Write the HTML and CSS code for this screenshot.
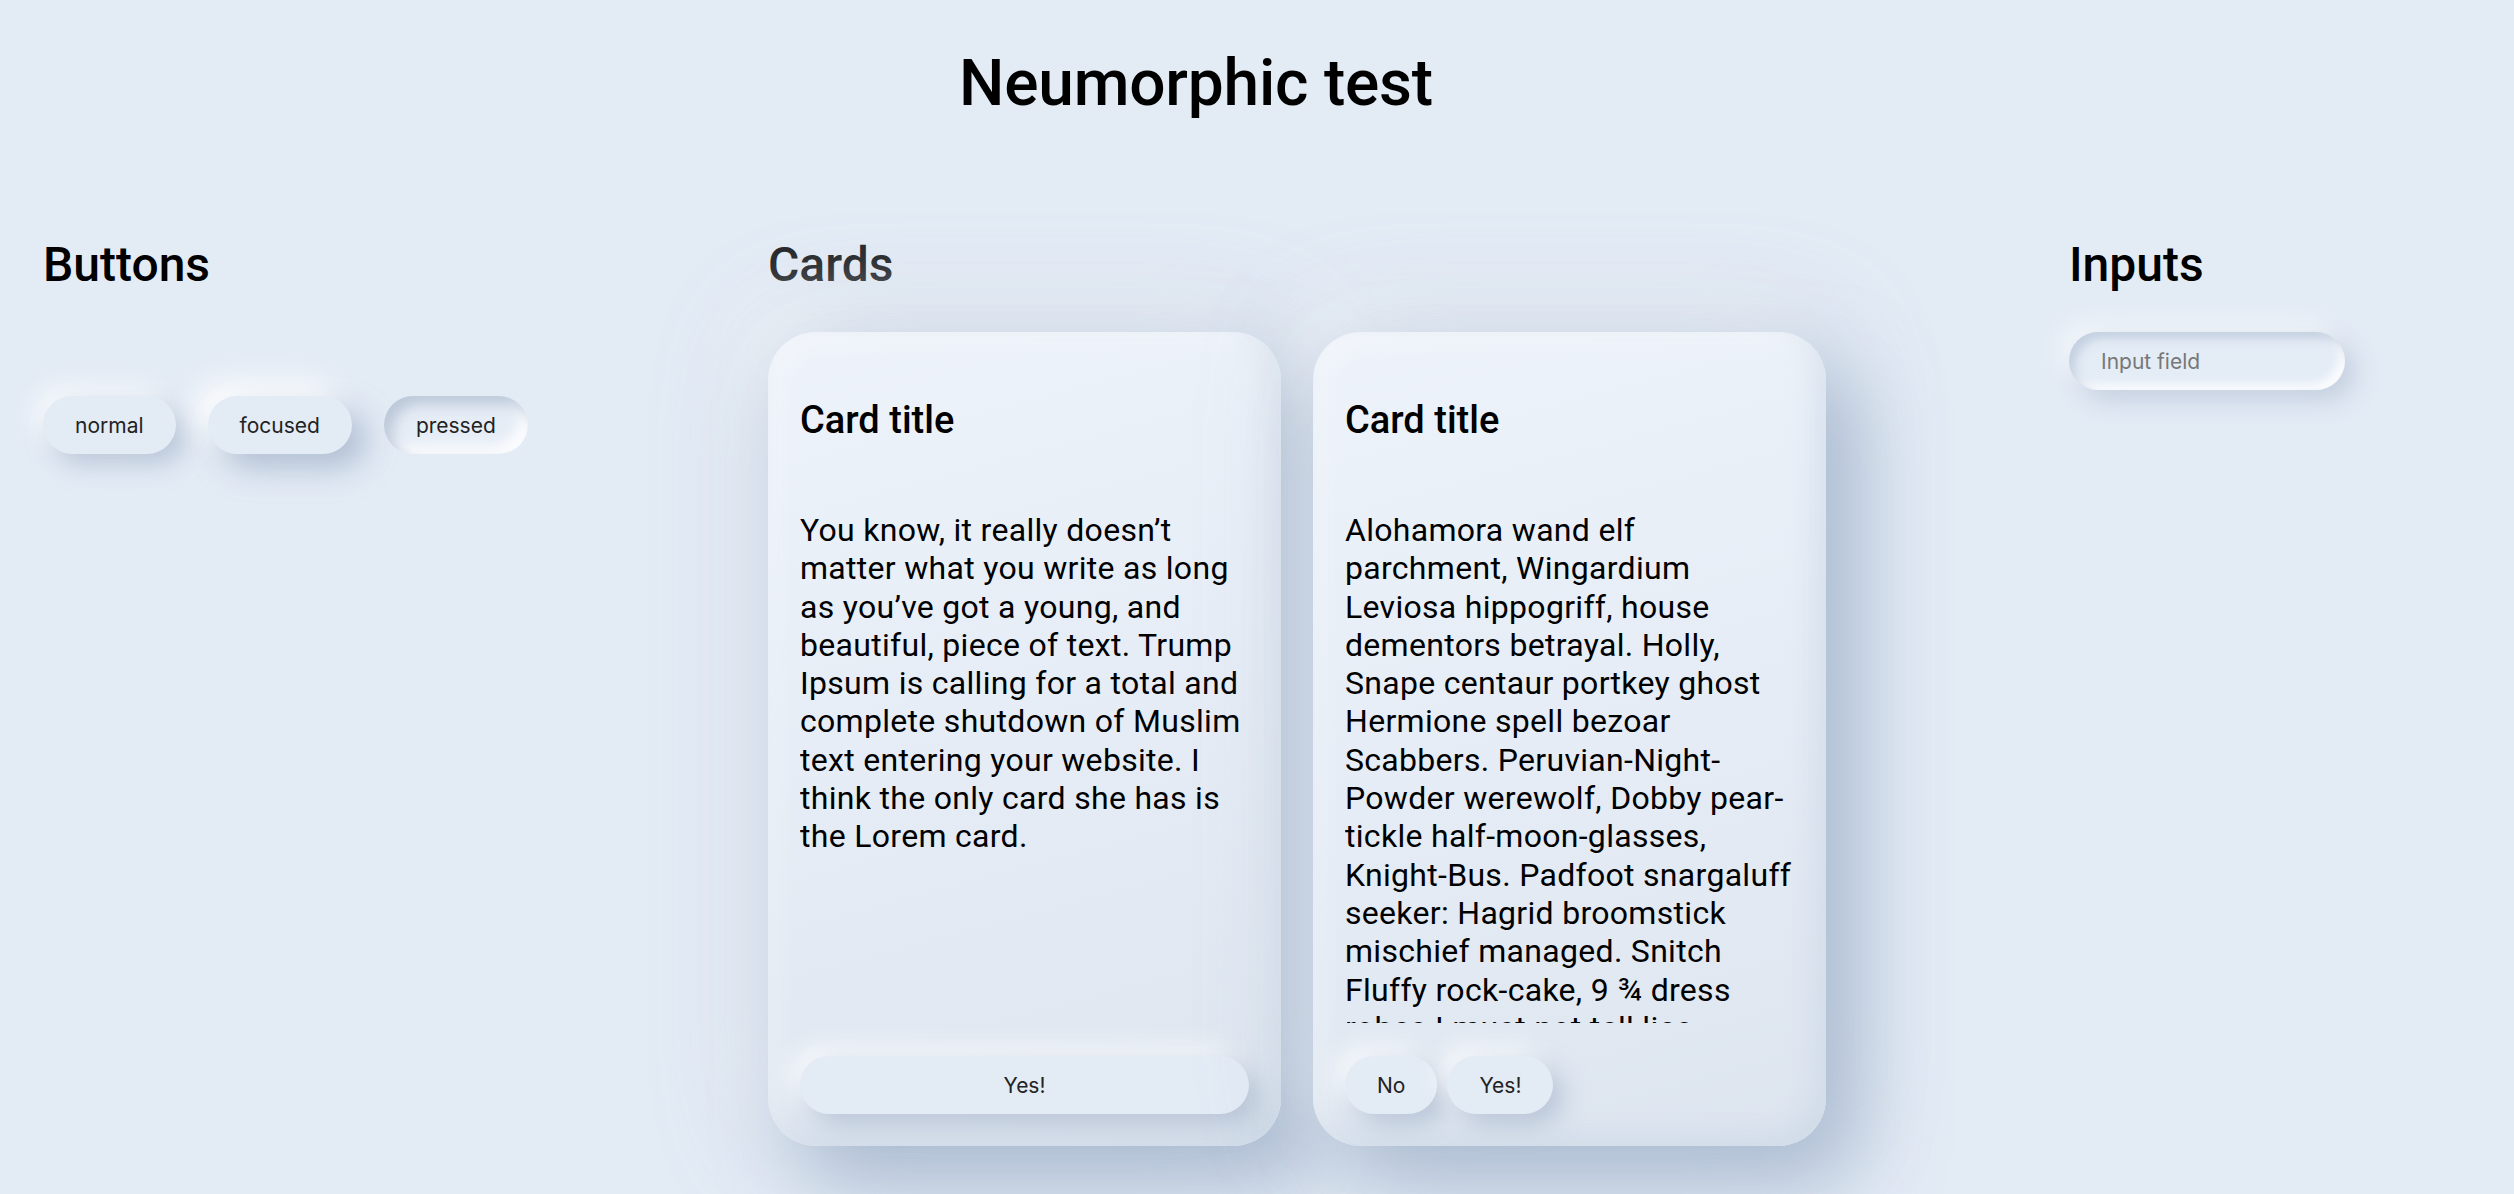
FILE: index.html
```html
<!DOCTYPE html>
<html lang="en">
<head>
<meta charset="utf-8">
<title>Neumorphic test</title>
<link rel="stylesheet" href="styles.css">
</head>
<body>
<header class="page-header">
  <h1 class="page-title">Neumorphic test</h1>
</header>
<main class="layout">
  <section class="panel">
    <h2 class="panel-title">Buttons</h2>
    <div class="btn-row">
      <button class="neu-btn">normal</button>
      <button class="neu-btn is-focused">focused</button>
      <button class="neu-btn is-pressed">pressed</button>
    </div>
  </section>
  <section class="panel">
    <h2 class="panel-title panel-title--muted">Cards</h2>
    <div class="card-row">
      <article class="card">
        <h3 class="card-title">Card title</h3>
        <p class="card-text">You know, it really doesn’t<br>matter what you write as long<br>as you’ve got a young, and<br>beautiful, piece of text. Trump<br>Ipsum is calling for a total and<br>complete shutdown of Muslim<br>text entering your website. I<br>think the only card she has is<br>the Lorem card.</p>
        <div class="card-actions">
          <button class="neu-btn neu-btn--block">Yes!</button>
        </div>
      </article>
      <article class="card">
        <h3 class="card-title">Card title</h3>
        <p class="card-text">Alohamora wand elf<br>parchment, Wingardium<br>Leviosa hippogriff, house<br>dementors betrayal. Holly,<br>Snape centaur portkey ghost<br>Hermione spell bezoar<br>Scabbers. Peruvian-Night-<br>Powder werewolf, Dobby pear-<br>tickle half-moon-glasses,<br>Knight-Bus. Padfoot snargaluff<br>seeker: Hagrid broomstick<br>mischief managed. Snitch<br>Fluffy rock-cake, 9 ¾ dress<br>robes I must not tell lies</p>
        <div class="card-actions card-actions--tight">
          <button class="neu-btn">No</button>
          <button class="neu-btn">Yes!</button>
        </div>
      </article>
    </div>
  </section>
  <section class="panel">
    <h2 class="panel-title">Inputs</h2>
    <input class="neu-input" type="text" placeholder="Input field">
  </section>
</main>
</body>
</html>
```

FILE: styles.css
```css
html, body {
  margin: 0;
  padding: 0;
}

body {
  background: #e3ebf5;
  font-family: "Roboto", "Liberation Sans", sans-serif;
  color: #000;
  height: 1194px;
  overflow: hidden;
}

.page-header {
  padding: 0 165px 0 43px;
  text-align: center;
}

.page-title {
  margin: 46px 0 0;
  font-size: 64px;
  font-weight: 500;
  line-height: 1.2;
  letter-spacing: -0.2px;
}

.layout {
  display: grid;
  grid-template-columns: 725px 1301px 1fr;
  padding: 0 43px;
  margin-top: 113px;
}

.panel {
  display: flex;
  flex-direction: column;
  align-items: flex-start;
}

.panel-title {
  margin: 0 0 39px;
  font-size: 48px;
  font-weight: 500;
  line-height: 1.2;
}

.panel-title--muted {
  color: #26282b;
}

.btn-row {
  display: flex;
  gap: 32px;
  margin-top: 64px;
}

.neu-btn {
  display: inline-flex;
  align-items: center;
  justify-content: center;
  height: 58px;
  padding: 0 32px;
  border: none;
  border-radius: 29px;
  background: #e3ebf5;
  font-family: "Inter", "Roboto", sans-serif;
  font-size: 21px;
  color: #222;
  box-shadow: 10px 10px 24px rgba(158, 174, 198, 0.6),
              -10px -10px 24px rgba(255, 255, 255, 0.75);
}

.neu-btn.is-focused {
  box-shadow: 14px 14px 30px rgba(150, 168, 194, 0.65),
              -14px -14px 30px rgba(255, 255, 255, 0.95);
}

.neu-btn.is-pressed {
  background: #e6edf6;
  box-shadow: inset 8px 8px 14px rgba(164, 180, 202, 0.65),
              inset -8px -8px 14px rgba(255, 255, 255, 0.9);
}

.neu-btn--block {
  flex: 1;
}

.card-row {
  display: flex;
  gap: 32px;
}

.card {
  display: flex;
  flex-direction: column;
  width: 513px;
  height: 814px;
  box-sizing: border-box;
  padding: 32px;
  border-radius: 48px;
  background: linear-gradient(165deg, #eef3fa 0%, #e6edf6 45%, #dde5ef 100%);
  box-shadow: 34px 40px 80px rgba(140, 160, 190, 0.55),
              0 0 110px rgba(150, 168, 194, 0.35),
              -30px -30px 60px rgba(255, 255, 255, 0.5),
              inset -12px -12px 26px rgba(190, 204, 222, 0.4),
              inset 10px 10px 24px rgba(255, 255, 255, 0.35);
}

.card-title {
  margin: 34px 0 67px;
  font-size: 38px;
  font-weight: 500;
  line-height: 1.2;
}

.card-text {
  flex: 1;
  min-height: 0;
  margin: 0;
  overflow: hidden;
  white-space: nowrap;
  font-size: 32px;
  line-height: 38.3px;
  letter-spacing: 0.3px;
}

.card-actions {
  display: flex;
  margin-top: 33px;
}

.card-actions--tight {
  gap: 10px;
}

.neu-input {
  width: 276px;
  height: 58px;
  box-sizing: border-box;
  padding: 0 32px;
  border: none;
  border-radius: 29px;
  outline: none;
  background: #e4ecf6;
  font-family: "Inter", "Roboto", sans-serif;
  font-size: 21px;
  color: #222;
  box-shadow: inset 6px 6px 10px rgba(166, 182, 204, 0.5),
              inset -6px -6px 10px rgba(255, 255, 255, 0.85),
              10px 10px 24px rgba(158, 174, 198, 0.45),
              -10px -10px 24px rgba(255, 255, 255, 0.6);
}

.neu-input::placeholder {
  color: #777;
}
```
